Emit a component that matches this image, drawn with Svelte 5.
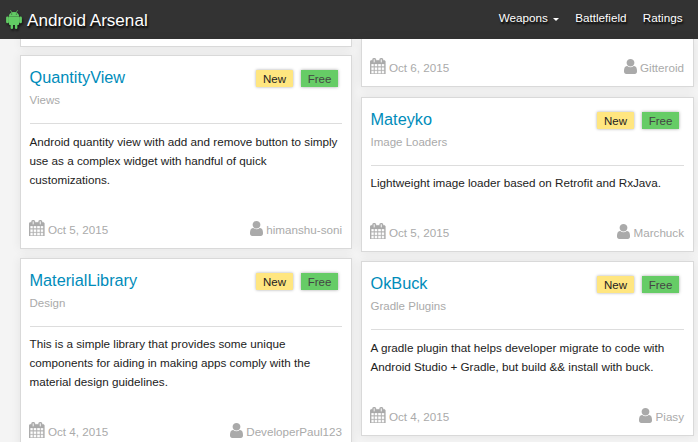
<script>
  const columns = [
    [
      { edge: true, height: 8 },
      { name: 'QuantityView', category: 'Views', text: 'Android quantity view with add and remove button to simply\nuse as a complex widget with handful of quick\ncustomizations.', date: 'Oct 5, 2015', author: 'himanshu-soni', height: 194 },
      { name: 'MaterialLibrary', category: 'Design', text: 'This is a simple library that provides some unique\ncomponents for aiding in making apps comply with the\nmaterial design guidelines.', date: 'Oct 4, 2015', author: 'DeveloperPaul123', height: 193, tight: true }
    ],
    [
      { edge: true, height: 48, date: 'Oct 6, 2015', author: 'Gitteroid' },
      { name: 'Mateyko', category: 'Image Loaders', text: 'Lightweight image loader based on Retrofit and RxJava.', date: 'Oct 5, 2015', author: 'Marchuck', height: 155, tight: true },
      { name: 'OkBuck', category: 'Gradle Plugins', text: 'A gradle plugin that helps developer migrate to code with\nAndroid Studio + Gradle, but build && install with buck.', date: 'Oct 4, 2015', author: 'Piasy', height: 175 }
    ]
  ];
</script>

<div class="page">
  <header>
    <div class="brand">
      <svg class="droid" viewBox="0 0 16 19" width="16" height="19" fill="#62cc64">
        <path d="M4.6.5 6 2.8M11.4.5 10 2.8" stroke="#62cc64" stroke-width=".7" stroke-linecap="round" />
        <path fill-rule="evenodd" d="M2.9 6.1C3 3.6 5 1.9 8 1.9s5 1.7 5.1 4.2zM5.2 4a.5.5 0 1 0 1 0 .5.5 0 1 0-1 0zm4.6 0a.5.5 0 1 0 1 0 .5.5 0 1 0-1 0z" />
        <rect x=".1" y="6.4" width="2.8" height="6.8" rx="1.3" />
        <rect x="13.1" y="6.4" width="2.8" height="6.8" rx="1.3" />
        <path d="M2.9 6.2h10.2v7.7q0 1.1-1.1 1.1h-.6v2.7a1.2 1.2 0 0 1-2.5 0V15H7.1v2.7a1.2 1.2 0 0 1-2.5 0V15H4q-1.1 0-1.1-1.1z" />
      </svg>
      <span>Android Arsenal</span>
    </div>
    <nav>
      <a>Weapons<i class="caret"></i></a>
      <a>Battlefield</a>
      <a>Ratings</a>
    </nav>
  </header>

  <main>
    {#each columns as cards, c}
      <div class="column" class:second={c === 1}>
        {#each cards as card}
          <article class:edge={card.edge} class:tight={card.tight} style:height="{card.height}px">
            {#if card.name}
              <div class="head">
                <h2>{card.name}</h2>
                <div class="tags"><span class="new">New</span><span class="free">Free</span></div>
              </div>
              <div class="category">{card.category}</div>
              <hr />
              <p>{card.text}</p>
            {/if}
            {#if card.date}
              <footer>
                <span class="meta">
                  <svg class="calendar" viewBox="64 0 1664 1792" width="15.5" height="16.6" fill="currentColor"><path d="M192 1664h288v-288h-288v288zm352 0h320v-288h-320v288zm-352-352h288v-320h-288v320zm352 0h320v-320h-320v320zm-352-384h288v-288h-288v288zm736 736h320v-288h-320v288zm-384-736h320v-288h-320v288zm768 736h288v-288h-288v288zm-384-352h320v-320h-320v320zm-352-864v-288q0-13-9.5-22.5t-22.5-9.5h-64q-13 0-22.5 9.5t-9.5 22.5v288q0 13 9.5 22.5t22.5 9.5h64q13 0 22.5-9.5t9.5-22.5zm736 864h288v-320h-288v320zm-384-384h320v-288h-320v288zm384 0h288v-288h-288v288zm32-480v-288q0-13-9.5-22.5t-22.5-9.5h-64q-13 0-22.5 9.5t-9.5 22.5v288q0 13 9.5 22.5t22.5 9.5h64q13 0 22.5-9.5t9.5-22.5zm384-64v1280q0 52-38 90t-90 38h-1408q-52 0-90-38t-38-90v-1280q0-52 38-90t90-38h128v-96q0-66 47-113t113-47h64q66 0 113 47t47 113v96h384v-96q0-66 47-113t113-47h64q66 0 113 47t47 113v96h128q52 0 90 38t38 90z" /></svg>
                  <span>{card.date}</span>
                </span>
                <span class="meta">
                  <svg class="user" viewBox="0 128 1280 1536" width="13" height="15" preserveAspectRatio="none" fill="currentColor"><path d="M1280 1399q0 109-62.5 187t-150.5 78h-854q-88 0-150.5-78t-62.5-187q0-85 8.5-160.5t31.5-152 58.5-131 94-89 134.5-34.5q131 128 313 128t313-128q76 0 134.5 34.5t94 89 58.5 131 31.5 152 8.5 160.5zm-256-887q0 159-112.5 271.5t-271.5 112.5-271.5-112.5-112.5-271.5 112.5-271.5 271.5-112.5 271.5 112.5 112.5 271.5z" /></svg>
                  <span>{card.author}</span>
                </span>
              </footer>
            {/if}
          </article>
        {/each}
      </div>
    {/each}
  </main>
</div>

<style>
  :global(body) { margin: 0; }
  .page {
    width: 698px;
    height: 442px;
    overflow: hidden;
    background: #f4f4f4;
    font: 11.5px/19px "Liberation Sans", Arial, sans-serif;
    color: #222;
  }
  header {
    box-sizing: border-box;
    height: 39px;
    padding: 0 15.5px 0 6px;
    display: flex;
    justify-content: space-between;
    background: #333;
    color: #fff;
    text-shadow: 1px 2px 2px #000;
  }
  .brand { display: flex; align-items: center; gap: 5px; font-size: 17.1px; }
  .brand span { padding-top: 1px; }
  .droid { filter: drop-shadow(1px 2px 1px rgba(0, 0, 0, .6)); }
  nav { display: flex; gap: 16.3px; font-size: 11.7px; line-height: 35px; }
  .caret {
    display: inline-block;
    margin-left: 5px;
    vertical-align: 1px;
    border: 3px solid transparent;
    border-top-color: #fff;
    border-bottom: 0;
  }
  main { display: flex; gap: 9px; padding-left: 20px; }
  .column { width: 332px; display: flex; flex-direction: column; gap: 9px; }
  .column:not(.second) article:nth-child(2) { margin-top: -1px; }
  .column.second { width: 333px; }
  .column.second article:nth-child(2) { margin-top: 1px; }
  article {
    box-sizing: border-box;
    flex: none;
    display: flex;
    flex-direction: column;
    padding: 11px 9px 10px 8.5px;
    border: 1px solid #d9d9d9;
    background: #fff;
    box-shadow: 0 0 10px rgba(0, 0, 0, .07);
  }
  .edge { border-top: 0; padding-top: 0; }
  .column:not(.second) .edge { padding-bottom: 0; }
  .head { display: flex; justify-content: space-between; height: 20px; }
  h2 { margin: 0; font-size: 16.3px; font-weight: 400; line-height: 20px; color: #008cba; }
  .tags { display: flex; gap: 8px; padding: 3px 4px 0 0; }
  .second .tags { padding-right: 5px; }
  .tags span {
    box-sizing: border-box;
    width: 37px;
    height: 17px;
    line-height: 18px;
    text-align: center;
    box-shadow: 0 0 3px rgba(0, 0, 0, .35);
  }
  .new { background: #ffe680; border-radius: 1px; }
  .free { background: #66cc66; color: #444; }
  .category { margin-top: 4px; color: #aaa; }
  hr { width: 100%; height: 1px; margin: 13px 0 8px; border: 0; background: #ddd; flex: none; }
  p { margin: 0; white-space: pre; font-size: 11.7px; }
  .tight hr { margin-bottom: 7px; }
  footer { display: flex; justify-content: space-between; margin-top: auto; color: #aaa; }
  .meta { display: flex; align-items: center; gap: 3.5px; height: 18px; }
  .meta span { font-size: 11.65px; }
  .meta svg { margin-top: -2px; }
  .meta .calendar { margin-left: -.5px; stroke: currentColor; stroke-width: 30px; }
</style>
